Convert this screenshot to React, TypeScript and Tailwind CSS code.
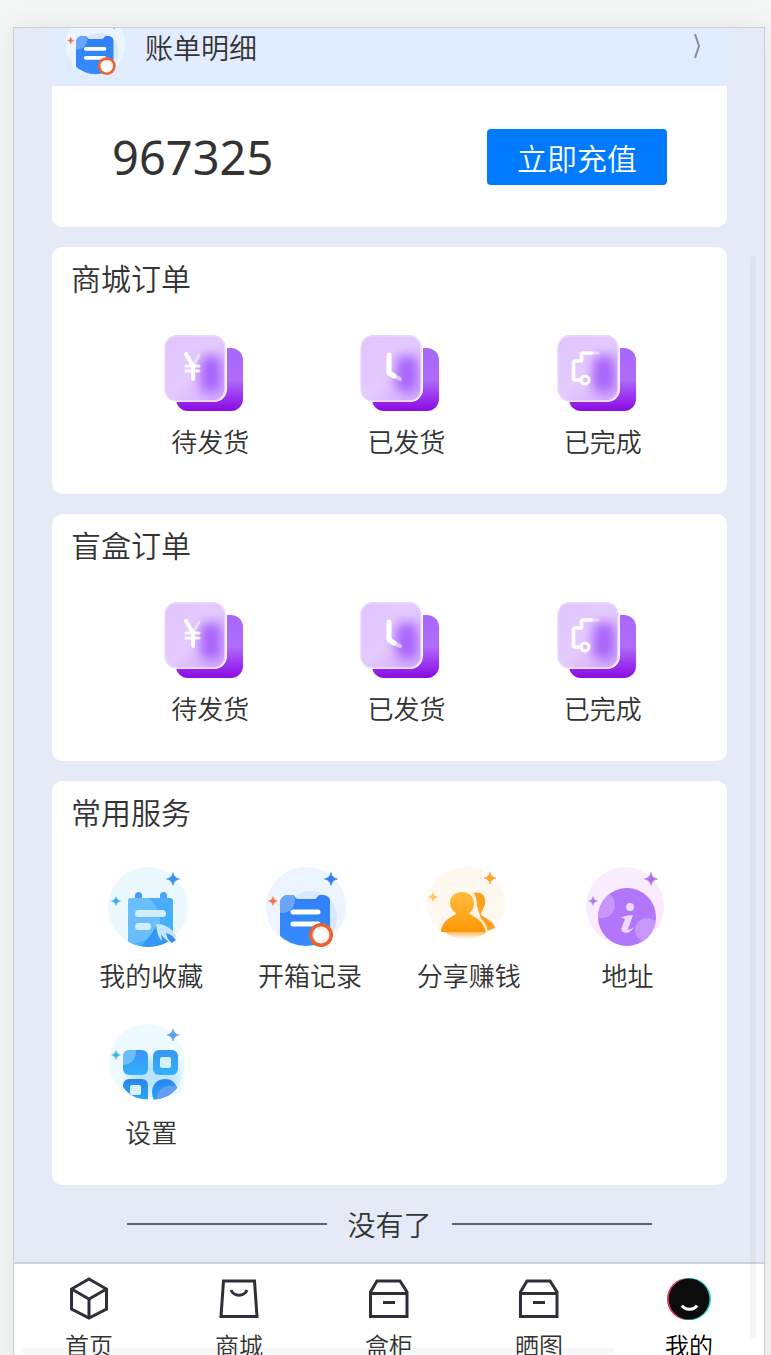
import React from 'react';

type IconProps = { className?: string };

const Sparkle: React.FC<{ x: number; y: number; r: number; fill: string }> = ({ x, y, r, fill }) => (
  <path
    transform={`translate(${x} ${y}) scale(${r})`}
    d="M0-1Q.14-.14 1 0Q.14.14 0 1Q-.14.14-1 0Q-.14-.14 0-1Z"
    fill={fill}
    stroke={fill}
    strokeWidth="0.1"
  />
);

/* Order icons: frosted tile in front of a solid purple one */

const GlassTile: React.FC<{ id: string; children: React.ReactNode }> = ({ id, children }) => (
  <svg viewBox="0 0 92 80" className="h-20 w-[92px]" aria-hidden="true">
    <defs>
      <linearGradient id={`${id}-back`} x1="0" y1="0" x2="0" y2="1">
        <stop offset="0" stopColor="#a768fa" />
        <stop offset="0.5" stopColor="#b06cfb" />
        <stop offset="0.8" stopColor="#9930ee" />
        <stop offset="1" stopColor="#8a0be0" />
      </linearGradient>
      <linearGradient id={`${id}-front`} x1="0" y1="0" x2="1" y2="1">
        <stop offset="0" stopColor="#dfc4fc" />
        <stop offset="0.5" stopColor="#e4cbfd" />
        <stop offset="1" stopColor="#d3a9fc" />
      </linearGradient>
      <filter id={`${id}-soft`} x="-100%" y="-100%" width="300%" height="300%">
        <feGaussianBlur stdDeviation="6" />
      </filter>
      <clipPath id={`${id}-clip`}>
        <rect x="1" y="3" width="60" height="64" rx="12" />
      </clipPath>
    </defs>
    <rect x="12" y="15" width="67" height="63" rx="12" fill={`url(#${id}-back)`} />
    <rect x="0" y="2" width="63" height="67" rx="13" fill="#fff" />
    <rect x="1" y="2" width="60" height="66" rx="12" fill={`url(#${id}-front)`} />
    <g clipPath={`url(#${id}-clip)`}>
      <rect x="36" y="22" width="22" height="38" rx="9" fill="#a864fb" filter={`url(#${id}-soft)`} />
    </g>
    <rect x="1" y="3" width="60" height="65" rx="12" fill="none" stroke="#ecd8fe" strokeWidth="1.5" />
    {children}
  </svg>
);

const YenIcon: React.FC<{ id: string }> = ({ id }) => (
  <GlassTile id={id}>
    <g fill="none" stroke="#fff" strokeLinecap="round">
      <path d="M22 21l7 12v13" strokeWidth="4" />
      <path d="M35 22l-6 11" strokeWidth="3" opacity="0.5" />
      <path d="M22 33h13M22 38h13" strokeWidth="3" opacity="0.85" />
    </g>
  </GlassTile>
);

const ClockIcon: React.FC<{ id: string }> = ({ id }) => (
  <GlassTile id={id}>
    <g fill="none" stroke="#fff" strokeLinecap="round" strokeLinejoin="round">
      <path d="M29 22v18l5 3" strokeWidth="5" />
      <path d="M34 43l6 3" strokeWidth="4" opacity="0.55" />
    </g>
  </GlassTile>
);

const TruckIcon: React.FC<{ id: string }> = ({ id }) => (
  <GlassTile id={id}>
    <g fill="none" stroke="#fff" strokeLinecap="round" strokeLinejoin="round">
      <path d="M23 47h-5a1.500 1.500 0 0 1-1.500-1.500V30a2 2 0 0 1 2-2h6v-6a2 2 0 0 1 2-2h8" strokeWidth="3.6" />
      <path d="M34 20h7" strokeWidth="3" opacity="0.45" />
      <circle cx="28" cy="47" r="4" strokeWidth="3.2" />
    </g>
  </GlassTile>
);

/* Service icons */

const FavoriteIcon: React.FC<IconProps> = ({ className }) => (
  <svg viewBox="0 0 92 80" className={className} aria-hidden="true">
    <defs>
      <linearGradient id="fav-fill" x1="0" y1="0" x2="0.6" y2="1">
        <stop offset="0" stopColor="#51a9f8" />
        <stop offset="1" stopColor="#3fb2fb" />
      </linearGradient>
      <clipPath id="fav-clip">
        <circle cx="43" cy="40" r="40" />
      </clipPath>
    </defs>
    <circle cx="43" cy="40" r="40" fill="#ebf9ff" />
    <g clipPath="url(#fav-clip)">
      <rect x="30" y="25" width="7" height="10" rx="3.500" fill="#459cf3" />
      <rect x="55" y="25" width="7" height="10" rx="3.500" fill="#4aa5f6" />
      <rect x="23" y="31" width="45" height="52" rx="3" fill="url(#fav-fill)" />
      <path d="M23 77V34a3 3 0 0 1 3-3h17c12 8 16 27 8 35-5 6-14 10-28 11z" fill="#7cc8fd" opacity="0.65" />
      <path d="M36 80c6-8 11-13 16-22l17 18v6z" fill="#3497f4" />
      <rect x="30" y="43" width="31" height="7" rx="3.500" fill="#d3efff" />
      <rect x="30" y="56" width="16" height="7" rx="3.500" fill="#d3efff" />
    </g>
    <path d="M51 57c8 0 14 3 19 10l2 4-9-4 4 9c-6-2-8-5-11-9l1 7c-4-4-5-9-6-17z" fill="#c4e7ff" />
    <path d="M61 66c4 1 8 4 10 7l-4 3c-3-2-5-5-6-10z" fill="#398ff1" />
    <Sparkle x={68} y={12} r={6.5} fill="#3b93ee" />
    <Sparkle x={11} y={34} r={4.5} fill="#3da9ec" />
  </svg>
);

const RecordIcon: React.FC<IconProps & { id: string }> = ({ id, className }) => (
  <svg viewBox="0 0 92 80" className={className} aria-hidden="true">
    <defs>
      <clipPath id={`${id}-clip`}>
        <circle cx="42" cy="40" r="39" />
      </clipPath>
      <clipPath id={`${id}-board`}>
        <path d="M16 36a8 8 0 0 1 8-8h5c2 0 2 4 5 4h16c4 0 3-4 6-4h3a8 8 0 0 1 8 8v48H16z" />
      </clipPath>
      <linearGradient id={`${id}-fill`} x1="0" y1="0" x2="0" y2="1">
        <stop offset="0" stopColor="#2f80f8" />
        <stop offset="1" stopColor="#388bff" />
      </linearGradient>
    </defs>
    <circle cx="42" cy="40" r="40" fill="#ecf4ff" />
    <g clipPath={`url(#${id}-clip)`}>
      <circle cx="47" cy="50" r="26" fill="#d8e9ff" />
      <g clipPath={`url(#${id}-board)`}>
        <rect x="16" y="26" width="50" height="58" fill={`url(#${id}-fill)`} />
        <circle cx="18" cy="33" r="13" fill="#69a6fc" />
      </g>
    </g>
    <path d="M29 45h25M29 57h25" stroke="#fff" strokeWidth="5" strokeLinecap="round" />
    <circle cx="57" cy="68" r="12" fill="#ed6230" />
    <circle cx="57" cy="68" r="8.500" fill="#fff2ea" />
    <circle cx="56" cy="69" r="6.500" fill="#fff" />
    <Sparkle x={67} y={12} r={6.5} fill="#347fe6" />
    <Sparkle x={9} y={34} r={4.5} fill="#f07445" />
  </svg>
);

const ShareIcon: React.FC<IconProps> = ({ className }) => (
  <svg viewBox="0 0 92 80" className={className} aria-hidden="true">
    <defs>
      <linearGradient id="share-fill" x1="0" y1="0" x2="0" y2="1">
        <stop offset="0" stopColor="#ffbd3e" />
        <stop offset="1" stopColor="#ff9708" />
      </linearGradient>
      <linearGradient id="share-fade" x1="0" y1="0" x2="0" y2="1">
        <stop offset="0" stopColor="#ffbd60" />
        <stop offset="1" stopColor="#fff5e8" />
      </linearGradient>
    </defs>
    <ellipse cx="43" cy="36" rx="39" ry="36" fill="#fff8ee" />
    <path d="M22 65h42c-9 8-32 9-42 0z" fill="url(#share-fade)" />
    <path d="M50 26c10-3 15 6 11 14-1 3-3 5-3 7 0 3 12 5 14 14l-10 4z" fill="#ffa11f" />
    <path
      d="M39 25c8 0 12 5 12 12 0 4-2 7-4 9 1 4 15 4 16 19H18c1-14 14-15 15-19-4-3-6-6-6-10 0-6 4-11 12-11z"
      fill="url(#share-fill)"
    />
    <path d="M49 26c5 6 5 14-1 20 2 3 14 5 16 20" fill="none" stroke="#fff1dc" strokeWidth="2.200" />
    <Sparkle x={67} y={11} r={6} fill="#f9a52c" />
    <Sparkle x={10} y={30} r={4.5} fill="#ffc45d" />
  </svg>
);

const AddressIcon: React.FC<IconProps> = ({ className }) => (
  <svg viewBox="0 0 92 80" className={className} aria-hidden="true">
    <defs>
      <clipPath id="addr-clip">
        <circle cx="45" cy="50" r="29" />
      </clipPath>
      <linearGradient id="addr-bg" x1="0" y1="0" x2="0.3" y2="1">
        <stop offset="0" stopColor="#f7efff" />
        <stop offset="1" stopColor="#fce8fe" />
      </linearGradient>
    </defs>
    <circle cx="43" cy="39" r="39" fill="url(#addr-bg)" />
    <circle cx="45" cy="50" r="29" fill="#b276fa" />
    <g clipPath="url(#addr-clip)">
      <circle cx="20" cy="38" r="13" fill="#c797fc" />
      <circle cx="65" cy="63" r="12" fill="#c797fc" />
    </g>
    <circle cx="48" cy="40" r="4" fill="#ead8ff" />
    <path d="M38 51c4-2 8-3 13-3l-5 14c0 2 3 0 6-2-3 5-7 7-11 5-4-1 1-9 2-13-2-1-3-1-5-1z" fill="#ead8ff" />
    <Sparkle x={69} y={12} r={6.5} fill="#ad73ea" />
    <Sparkle x={11} y={34} r={4.5} fill="#af80e9" />
  </svg>
);

const SettingIcon: React.FC<IconProps> = ({ className }) => (
  <svg viewBox="0 0 92 80" className={className} aria-hidden="true">
    <defs>
      <clipPath id="set-clip">
        <path d="M4 0h84v50l-14 13c-12 17-46 18-56 0L4 50z" />
      </clipPath>
      <clipPath id="set-tile">
        <rect x="18" y="26" width="25" height="25" rx="6" />
      </clipPath>
      <linearGradient id="set-top" x1="0" y1="0" x2="0" y2="1">
        <stop offset="0" stopColor="#3895f1" />
        <stop offset="1" stopColor="#32b0fc" />
      </linearGradient>
      <linearGradient id="set-bottom" x1="0" y1="0" x2="0" y2="1">
        <stop offset="0" stopColor="#2c82e7" />
        <stop offset="1" stopColor="#26a8fa" />
      </linearGradient>
      <filter id="set-glow" x="-30%" y="-30%" width="160%" height="160%">
        <feGaussianBlur stdDeviation="4" />
      </filter>
    </defs>
    <circle cx="42" cy="38" r="38" fill="#edfaff" />
    <rect x="24" y="34" width="50" height="34" rx="9" fill="#bce4ff" filter="url(#set-glow)" />
    <g clipPath="url(#set-clip)">
      <rect x="18" y="26" width="25" height="25" rx="6" fill="url(#set-top)" />
      <circle cx="18" cy="28" r="13" fill="#7bc6fb" opacity="0.8" clipPath="url(#set-tile)" />
      <rect x="48" y="26" width="25" height="25" rx="6" fill="url(#set-top)" />
      <rect x="55" y="33" width="11" height="11" rx="2" fill="#d8efff" />
      <path d="M18 61a6 6 0 0 1 6-6h13a6 6 0 0 1 6 6v14c-10 1-20-4-25-12z" fill="url(#set-bottom)" />
      <rect x="25" y="61" width="11" height="10" rx="2" fill="#d8f0ff" />
      <path d="M49 76c-5-10 0-21 11-21 6 0 10 3 12 9-5 6-12 11-23 12z" fill="url(#set-bottom)" />
      <path d="M52 75c-1-8 6-15 20-13-3 8-11 12-20 13z" fill="#639ffa" />
    </g>
    <Sparkle x={68} y={11} r={6} fill="#609ff5" />
    <Sparkle x={11} y={31} r={4.5} fill="#42b2df" />
  </svg>
);

/* Tab bar icons */

const BoxIcon = () => (
  <svg viewBox="0 0 44 44" className="size-11" fill="none" stroke="#2e2f38" strokeWidth="3" aria-hidden="true">
    <path d="M22 2l17.500 10v20L22 41 4.500 32V12z" />
    <path d="M4.500 12L22 22l17.500-10M22 22v19" />
  </svg>
);

const BagIcon = () => (
  <svg viewBox="0 0 44 44" className="size-11" fill="none" stroke="#2e2f38" strokeWidth="3" aria-hidden="true">
    <path d="M6.500 4h31l2.500 35.500H4z" />
    <path d="M14 13c3 7 13 7 16 0" />
  </svg>
);

const CabinetIcon = () => (
  <svg viewBox="0 0 44 44" className="size-11" fill="none" stroke="#2e2f38" strokeWidth="3" aria-hidden="true">
    <path d="M3.500 39.500V15l6.500-11h23L40 15v24.500z" />
    <path d="M3.500 16.500H40M16 25.500h12" />
  </svg>
);

const FaceIcon = () => (
  <svg viewBox="0 0 44 44" className="size-11" aria-hidden="true">
    <circle cx="21" cy="22" r="21" fill="#e8325f" />
    <circle cx="23" cy="22" r="21" fill="#25d8cc" />
    <circle cx="22" cy="22" r="20.500" fill="#0c0c0d" />
    <path d="M1 22a21 21 0 0 1 10-18M1 22a21 21 0 0 0 10 18" fill="none" stroke="#e8325f" strokeWidth="1.200" />
    <path d="M15 28.500c3 5 12 5 15 0" fill="none" stroke="#fff" strokeWidth="3" />
  </svg>
);

const orderItems = [
  { label: '待发货', Icon: YenIcon },
  { label: '已发货', Icon: ClockIcon },
  { label: '已完成', Icon: TruckIcon },
];

const services = [
  { label: '我的收藏', icon: <FavoriteIcon className="h-20 w-[92px]" /> },
  { label: '开箱记录', icon: <RecordIcon id="record" className="h-20 w-[92px]" /> },
  { label: '分享赚钱', icon: <ShareIcon className="h-20 w-[92px]" /> },
  { label: '地址', icon: <AddressIcon className="h-20 w-[92px]" /> },
  { label: '设置', icon: <SettingIcon className="h-20 w-[92px]" /> },
];

const tabs = [
  { label: '首页', icon: <BoxIcon /> },
  { label: '商城', icon: <BagIcon /> },
  { label: '盒柜', icon: <CabinetIcon /> },
  { label: '晒图', icon: <CabinetIcon /> },
  { label: '我的', icon: <FaceIcon />, active: true },
];

const Card: React.FC<{ title: string; children: React.ReactNode }> = ({ title, children }) => (
  <section className="rounded-[10px] bg-white pt-2 pb-[34px]">
    <h2 className="mb-[34px] px-[19px] text-[30px] leading-[44px]">{title}</h2>
    {children}
  </section>
);

const Entry: React.FC<{ label: string; children: React.ReactNode }> = ({ label, children }) => (
  <button type="button" className="flex flex-col items-center gap-[10px]">
    {children}
    <span className="mb-px text-[26px] leading-9 whitespace-nowrap">{label}</span>
  </button>
);

const OrderCard: React.FC<{ id: string; title: string }> = ({ id, title }) => (
  <Card title={title}>
    <div className="grid grid-cols-3 pr-[26px] pl-[60px]">
      {orderItems.map(({ label, Icon }, i) => (
        <Entry key={label} label={label}>
          <Icon id={`${id}-${i}`} />
        </Entry>
      ))}
    </div>
  </Card>
);

export default function App() {
  return (
    <div className="h-screen overflow-hidden bg-[#f5f7f6] pt-[27px] pr-[6px] pl-[13px] font-['Noto_Sans_CJK_SC',sans-serif] font-[350] text-[#333]">
      <div className="relative border border-[#c9cfd3] bg-[#e4ebf6] shadow-[0_0_24px_rgba(60,70,60,0.1)]">
        <main className="pr-[37px] pl-[38px]">
          <div className="flex flex-col gap-5">
            <section className="overflow-hidden rounded-b-[10px] bg-white">
              {/* Bill row, scrolled partly out of view */}
              <div className="flex h-[58px] items-end overflow-hidden bg-[#e1edff]">
                <button type="button" className="flex h-[82px] w-full shrink-0 items-center pr-5 pl-3 text-left">
                  <RecordIcon id="bill" className="h-[60px] w-[69px]" />
                  <span className="ml-3 flex-1 pt-1 text-[28px] leading-10">账单明细</span>
                  <svg viewBox="0 0 16 28" className="h-7 w-4" fill="none" stroke="#858c97" strokeWidth="2" aria-hidden="true">
                    <path d="M4 3l4 12-4 12" />
                  </svg>
                </button>
              </div>
              <div className="flex items-center justify-between px-[60px] pt-[35px] pb-[34px]">
                <span className="font-['Noto_Sans',sans-serif] text-[47px] leading-[72px] font-normal">967325</span>
                <button type="button" className="h-14 w-[180px] rounded-[4px] bg-[#007aff] text-[30px] leading-[54px] text-white">
                  立即充值
                </button>
              </div>
            </section>

            <OrderCard id="mall" title="商城订单" />
            <OrderCard id="blind" title="盲盒订单" />

            <Card title="常用服务">
              <div className="grid grid-cols-4 gap-y-[30px] px-5">
                {services.map(({ label, icon }) => (
                  <Entry key={label} label={label}>
                    {icon}
                  </Entry>
                ))}
              </div>
            </Card>
          </div>

          <div className="flex items-center justify-center gap-5 pt-[19px] pb-[18px]">
            <span className="h-[2px] w-[200px] bg-[#59606b]" />
            <span className="text-[28px] leading-10">没有了</span>
            <span className="h-[2px] w-[200px] bg-[#59606b]" />
          </div>
        </main>

        <nav className="grid grid-cols-5 border-t-2 border-[#cfd3d7] bg-white pt-[13px] pb-4">
          {tabs.map(({ label, icon, active }) => (
            <a key={label} href="#" className="flex flex-col items-center gap-[6px]">
              {icon}
              <span className={active ? 'text-2xl leading-9 text-black' : 'text-2xl leading-9'}>{label}</span>
            </a>
          ))}
        </nav>

        {/* Scroll bars floating over the page */}
        <div className="pointer-events-none absolute top-[228px] right-2 bottom-10 w-[6px] rounded-full bg-black/[0.03]" />
        <div className="pointer-events-none absolute right-[149px] bottom-[25px] left-2 h-[6px] rounded-full bg-black/[0.03]" />
      </div>
    </div>
  );
}
